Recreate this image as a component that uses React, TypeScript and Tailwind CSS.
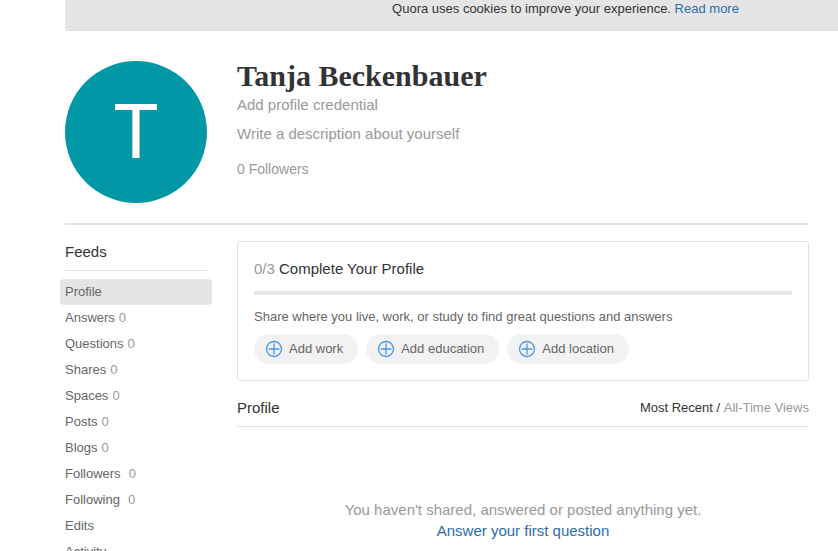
import clsx from "clsx";

interface Feed {
  label: string;
  count?: number;
  wide?: boolean;
}

const FEEDS: Feed[] = [
  { label: "Profile" },
  { label: "Answers", count: 0 },
  { label: "Questions", count: 0 },
  { label: "Shares", count: 0 },
  { label: "Spaces", count: 0 },
  { label: "Posts", count: 0 },
  { label: "Blogs", count: 0 },
  { label: "Followers", count: 0, wide: true },
  { label: "Following", count: 0, wide: true },
  { label: "Edits" },
  { label: "Activity" },
];

const CREDENTIALS = ["Add work", "Add education", "Add location"];

function PlusCircle() {
  return (
    <svg width="18" height="18" viewBox="0 0 18 18" fill="none" stroke="#4a9ae8" aria-hidden="true">
      <circle cx="9" cy="9" r="7.5" strokeWidth="1.3" />
      <path d="M9 4v10M4 9h10" strokeWidth="1.3" strokeLinecap="round" />
    </svg>
  );
}

function CookieBar() {
  return (
    <div className="ml-[65px] -mr-[228px] pb-3 bg-[#e5e5e5] border-b border-[#dddddd] rounded-b-sm text-center text-[13px] leading-[18px] text-[#333333]">
      Quora uses cookies to improve your experience.{" "}
      <a href="#cookies" className="text-[#2b6dad]">
        Read more
      </a>
    </div>
  );
}

function ProfileHeader() {
  return (
    <header className="flex gap-[30px] pb-5 border-b-2 border-[#e2e2e2]">
      <div className="flex items-center justify-center size-[142px] shrink-0 rounded-full bg-[#0097a7] font-['Roboto',sans-serif] text-white text-[76px] leading-none">
        T
      </div>
      <div className="flex flex-col items-start text-[15px] leading-5 text-[#999999]">
        <h1 className="font-['Liberation_Serif',serif] text-[30px] leading-[30px] font-bold text-[#333333]">
          Tanja Beckenbauer
        </h1>
        <button className="mt-1">Add profile credential</button>
        <button className="mt-[9px]">Write a description about yourself</button>
        <a href="#followers" className="mt-[15px] text-[14px]">
          0 Followers
        </a>
      </div>
    </header>
  );
}

function Sidebar() {
  return (
    <nav className="w-[142px] shrink-0" aria-label="Feeds">
      <h2 className="pt-px pb-2 border-b border-[#e2e2e2] text-[15px] leading-5 text-[#333333]">Feeds</h2>
      <ul className="mt-2 -mx-[5px]">
        {FEEDS.map((feed, i) => (
          <li key={feed.label}>
            <a
              href={`#${feed.label.toLowerCase()}`}
              className={clsx(
                "flex px-[5px] rounded-sm text-[13px] leading-[26px] text-[#666666]",
                feed.wide ? "gap-2" : "gap-1",
                i === 0 && "bg-[#e5e5e5]",
              )}
            >
              {feed.label}
              {feed.count !== undefined && <span className="text-[#999999]">{feed.count}</span>}
            </a>
          </li>
        ))}
      </ul>
    </nav>
  );
}

function CompleteProfile() {
  return (
    <section className="p-4 border border-[#e2e2e2] rounded-[3px]">
      <h2 className="text-[15px] leading-[22px] text-[#333333]">
        <span className="text-[#999999]">0/3</span> Complete Your Profile
      </h2>
      <div className="mt-[11px] h-1 bg-[#e5e5e5]" />
      <p className="mt-3 text-[13px] leading-5 text-[#666666]">
        Share where you live, work, or study to find great questions and answers
      </p>
      <div className="flex flex-wrap gap-2 mt-[7px]">
        {CREDENTIALS.map((label) => (
          <button
            key={label}
            className="flex items-center gap-1.5 h-[30px] pl-[11px] pr-[15px] rounded-full bg-[#f2f2f2] text-[13px] text-[#666666]"
          >
            <PlusCircle />
            {label}
          </button>
        ))}
      </div>
    </section>
  );
}

export default function App() {
  return (
    <div className="h-screen overflow-hidden bg-white font-['Liberation_Sans',Arial,sans-serif]">
      <CookieBar />
      <div className="pl-[65px] pr-[29px] pt-[30px]">
        <ProfileHeader />
        <div className="flex gap-[30px] pt-4">
          <Sidebar />
          <main className="flex-1 min-w-0">
            <CompleteProfile />
            <div className="flex items-center justify-between pt-[17px] pb-2 border-b border-[#e2e2e2] text-[#333333]">
              <h2 className="text-[15px] leading-5">Profile</h2>
              <div className="text-[13px] leading-5">
                <button>Most Recent</button> / <button className="text-[#999999]">All-Time Views</button>
              </div>
            </div>
            <div className="pt-[72px] text-center text-[15px] leading-[21px]">
              <p className="text-[#999999]">You haven't shared, answered or posted anything yet.</p>
              <a href="#answer" className="text-[#2b6dad]">
                Answer your first question
              </a>
            </div>
          </main>
        </div>
      </div>
    </div>
  );
}
